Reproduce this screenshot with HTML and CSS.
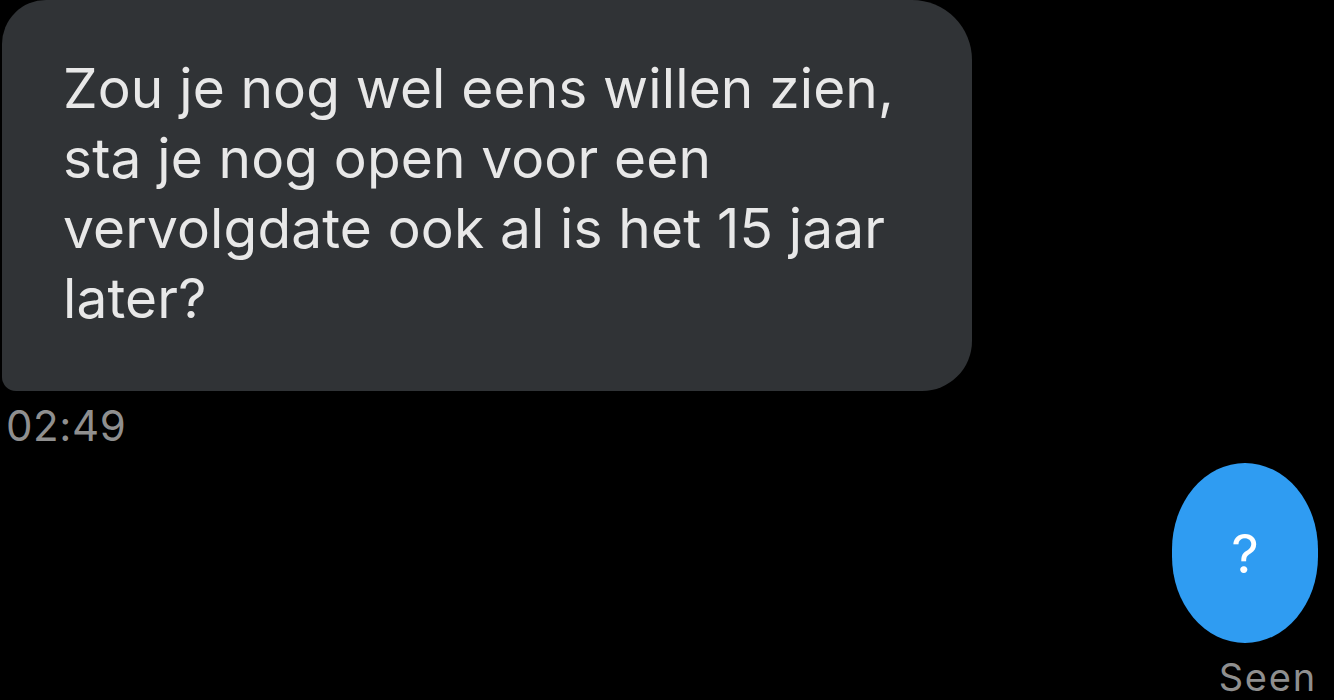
FILE: index.html
```
<html>
<head>
    <link rel="stylesheet" href="styles.css">
</head>
<body>
<div class="thread">
    <div class="msgIn">
        <div class="bubbleIn">Zou je nog wel eens willen zien,<br>sta je nog open voor een<br>vervolgdate ook al is het 15 jaar<br>later?</div>
        <div class="stamp">02:49</div>
    </div>
    <div class="msgOut">
        <div class="bubbleOut">?</div>
        <div class="seen">Seen</div>
    </div>
</div>
</body>
</html>
```

FILE: styles.css
```
body {
    margin: 0;
    background: #000000;
    font-family: Inter, "Liberation Sans", Arial, sans-serif;
    overflow: hidden;
}
.thread {
    display: flex;
    flex-direction: column;
    width: 1334px;
    height: 700px;
}
.msgIn {
    display: flex;
    flex-direction: column;
    align-items: flex-start;
    padding-left: 2px;
}
.bubbleIn {
    width: 909px;
    height: 338px;
    padding: 53px 0 0 61px;
    background: #303336;
    color: #e8e8e8;
    font-size: 55px;
    letter-spacing: 0.15px;
    line-height: 70px;
    border-radius: 44px 60px 50px 14px;
}
.stamp {
    margin-top: 12px;
    margin-left: 4px;
    color: #8f8f8f;
    font-size: 42px;
    letter-spacing: 0.6px;
    line-height: 46px;
}
.msgOut {
    display: flex;
    flex-direction: column;
    align-items: flex-end;
    margin-top: 14px;
    padding-right: 16px;
}
.bubbleOut {
    width: 146px;
    height: 180px;
    display: flex;
    align-items: center;
    justify-content: center;
    background: #2f9cf2;
    color: #ffffff;
    font-size: 54px;
    border-radius: 50% / 48%;
}
.seen {
    margin-top: 13px;
    margin-right: 1px;
    color: #8f8f8f;
    font-size: 38px;
    letter-spacing: 1.8px;
    line-height: 42px;
}
```
